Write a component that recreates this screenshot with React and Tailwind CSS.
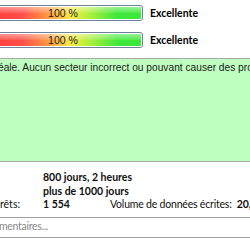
export default function App() {
  const bar = (
    <div className="relative -ml-[17px] w-[160px] h-[16px] rounded-[3px] border border-[#6d8099] bg-white p-[1px] shrink-0">
      <div className="relative w-full h-full rounded-[1px] bg-[linear-gradient(to_right,#ff3a3a_0%,#ff5048_24%,#ffa040_42%,#f8ec40_55%,#a6f03a_68%,#3ee83a_85%,#3ee83a_100%)]">
        <div className="absolute inset-x-0 top-0 h-1/2 bg-[linear-gradient(to_bottom,rgba(255,255,255,0.45),rgba(255,255,255,0.1))]" />
        <div className="absolute inset-0 flex items-center justify-center text-[10.5px] leading-none text-[#202020] font-['Liberation_Sans',sans-serif]">100 %</div>
      </div>
    </div>
  );
  return (
    <div className="w-[250px] h-[250px] overflow-hidden bg-white text-black font-['Lato',sans-serif]">
      <div className="flex items-center gap-[7px] mt-[5px] h-[16px]">
        {bar}
        <span className="text-[10.5px] font-bold leading-none">Excellente</span>
      </div>
      <div className="flex items-center gap-[7px] mt-[11px] h-[16px]">
        {bar}
        <span className="text-[10.5px] font-bold leading-none">Excellente</span>
      </div>
      <div className="mt-[10px] border-y border-[#a8a8a8] h-[104px] bg-[#bfffbf]">
        <div className="whitespace-nowrap -ml-[2px] mt-[2px] text-[10.2px] leading-[14px] text-[#202020] font-['Liberation_Sans',sans-serif]">
          éale. Aucun secteur incorrect ou pouvant causer des problèmes n'a été trouvé.
        </div>
      </div>
      <div className="text-[10.5px] leading-[13.5px] mt-[9px] text-[#101010]">
        <div className="pl-[43px] font-bold">800 jours, 2 heures</div>
        <div className="pl-[43px] font-bold">plus de 1000 jours</div>
        <div className="flex whitespace-nowrap">
          <span className="w-[43px] shrink-0">rêts:</span>
          <span className="w-[67px] shrink-0 font-bold">1 554</span>
          <span className="shrink-0 tracking-[-0.2px]">Volume de données écrites:</span>
          <span className="ml-[5px] font-bold">20,5 To</span>
        </div>
      </div>
      <div className="mt-[5px] border-y border-[#a0a0a0] h-[21px] flex items-center text-[10.5px] text-[#8a8a8a] whitespace-nowrap -ml-[1px] tracking-[-0.3px]">
        mentaires...
      </div>
    </div>
  );
}
